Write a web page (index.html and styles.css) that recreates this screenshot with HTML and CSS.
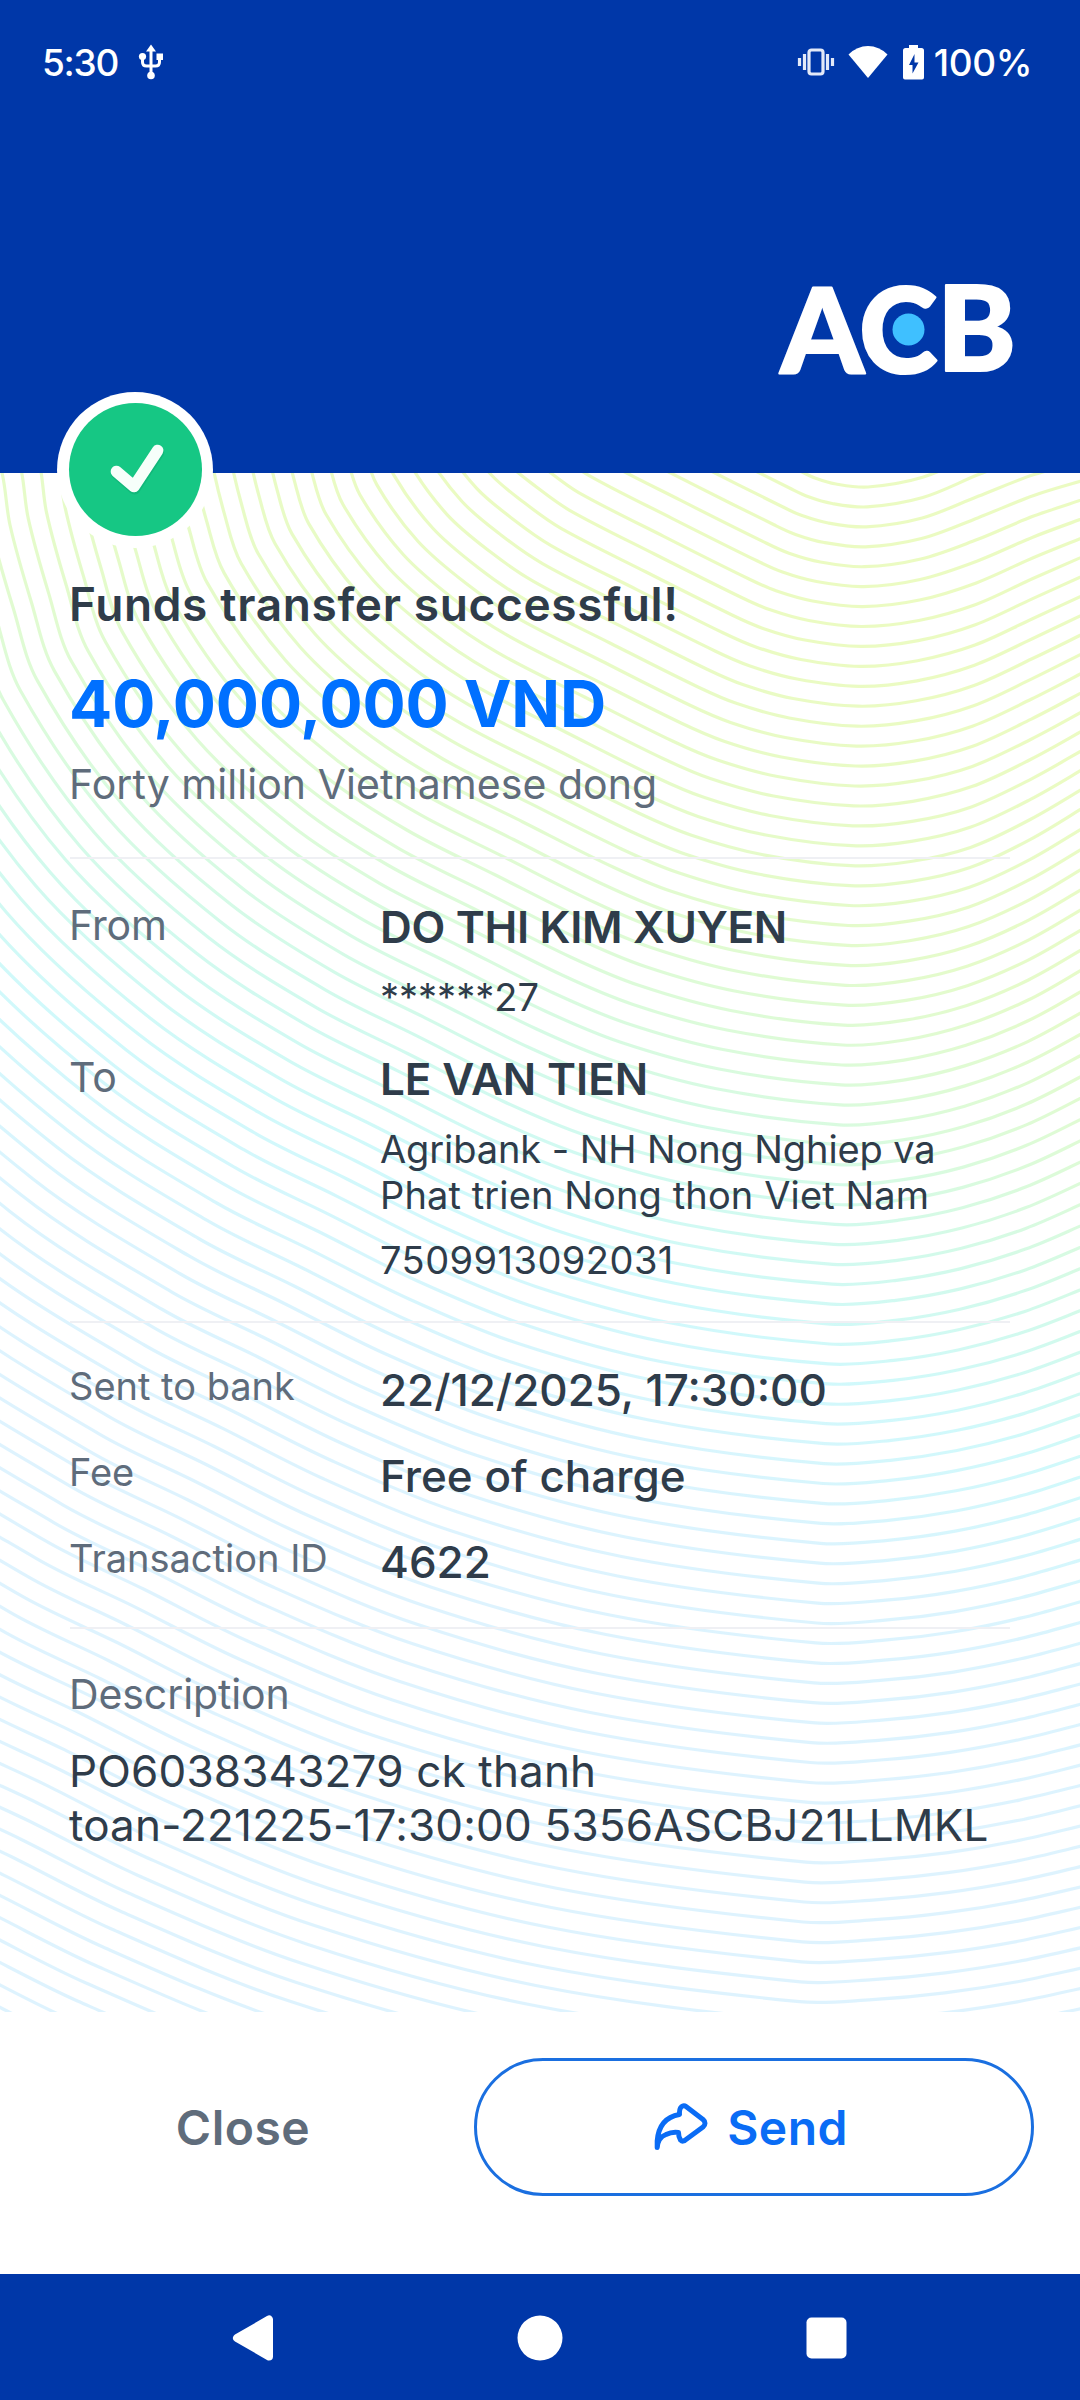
FILE: index.html
```html
<!DOCTYPE html>
<html lang="en">
<head>
<meta charset="utf-8">
<title>Funds transfer</title>
<link rel="stylesheet" href="styles.css">
</head>
<body>
<main class="screen">
  <header class="header">
    <div class="status">
      <div class="status-left">
        <span class="clock">5:30</span>
        <svg class="usb" width="26" height="36" viewBox="0 0 26 36" fill="none" stroke="#fff" stroke-width="3">
          <path d="M13 30V5M4.500 12v6q0 4 4 4h9q4 0 4-4v-6"/>
          <path d="M13 0.500l5 7h-10zM18.500 9.500h6.500v6.500h-6.500z" fill="#fff" stroke="none"/>
          <circle cx="4.500" cy="12.500" r="3.600" fill="#fff" stroke="none"/>
          <circle cx="13" cy="31.500" r="3.800" fill="#fff" stroke="none"/>
        </svg>
      </div>
      <div class="status-right">
        <svg class="vibrate" width="38" height="28" viewBox="0 0 38 28" fill="none" stroke="#e3e9f8" stroke-width="3.2">
          <rect x="12" y="2" width="14" height="24" rx="2.500"/>
          <path d="M7.500 6v16M2.500 10v8M30.500 6v16M35.500 10v8"/>
        </svg>
        <svg class="wifi" width="40" height="34" viewBox="0 0 40 34"><path fill="#fff" d="M20 33L0.500 9.500Q9 1 20 1t19.500 8.500z"/></svg>
        <svg class="battery" width="21" height="35" viewBox="0 0 21 35">
          <path fill="#fff" d="M6 0h9v3h3.500q2.500 0 2.500 2.500v27q0 2-2 2h-17q-2 0-2-2v-27q0-2.500 2.500-2.500H6z"/>
          <path fill="#0037a8" d="M11.500 9L6 20h3.500v8.500L15.500 17.500H11.500z"/>
        </svg>
        <span class="percent">100%</span>
      </div>
    </div>
    <svg class="logo" width="260" height="150" viewBox="-10 -30 260 150" role="img" aria-label="ACB">
      <g class="logo-text"><text x="4.500" y="92.500">A</text><text x="83" y="93">C</text><text x="161" y="91">B</text></g>
      <circle cx="132.500" cy="49.500" r="16" fill="#3fc0ff"/>
    </svg>
  </header>
  <section class="receipt">
    <svg class="waves" id="waves" width="1080" height="1539" viewBox="0 473 1080 1539">
      <defs>
        <linearGradient id="tint" gradientUnits="userSpaceOnUse" x1="500" y1="500" x2="70" y2="1434">
          <stop offset="0" stop-color="#ebfbc2"/>
          <stop offset=".22" stop-color="#e5fbca"/>
          <stop offset=".38" stop-color="#dcfbda"/>
          <stop offset=".5" stop-color="#d2faec"/>
          <stop offset=".63" stop-color="#d0f9fb"/>
          <stop offset=".8" stop-color="#dbf4fe"/>
          <stop offset="1" stop-color="#def3fe"/>
        </linearGradient>
      </defs>
    </svg>
    <div class="badge">
      <svg width="133" height="133" viewBox="0 0 133 133">
        <path d="M48 70.500L65.500 85.500L89.200 49.500" fill="none" stroke="#0a9f68" stroke-opacity=".35" stroke-width="12" stroke-linecap="round" stroke-linejoin="round"/>
        <path d="M47.400 68.500L65 83.500L88.700 47.500" fill="none" stroke="#f6fffa" stroke-width="11.500" stroke-linecap="round" stroke-linejoin="round"/>
      </svg>
    </div>
    <div class="content">
      <h1 class="title">Funds transfer successful!</h1>
      <p class="amount">40,000,000 VND</p>
      <p class="words">Forty million Vietnamese dong</p>
      <hr class="rule">
      <div class="parties">
        <div class="row">
          <span class="label big">From</span>
          <div class="value"><p class="name sender">DO THI KIM XUYEN</p><p class="detail">******27</p></div>
        </div>
        <div class="row">
          <span class="label big">To</span>
          <div class="value">
            <p class="name">LE VAN TIEN</p>
            <p class="detail"><span class="tight">Agribank - NH Nong Nghiep va</span><br><span class="loose">Phat trien Nong thon Viet Nam</span></p>
            <p class="detail account">7509913092031</p>
          </div>
        </div>
      </div>
      <hr class="rule">
      <div class="facts">
        <div class="row"><span class="label">Sent to bank</span><span class="fact">22/12/2025, 17:30:00</span></div>
        <div class="row"><span class="label">Fee</span><span class="fact">Free of charge</span></div>
        <div class="row"><span class="label">Transaction ID</span><span class="fact">4622</span></div>
      </div>
      <hr class="rule">
      <p class="label big desc-label">Description</p>
      <p class="desc">PO6038343279 ck thanh<br>toan-221225-17:30:00 5356ASCBJ21LLMKL</p>
    </div>
  </section>
  <footer class="actions">
    <button class="close">Close</button>
    <button class="send">
      <svg width="54" height="48" viewBox="0 0 54 48" fill="none" stroke="#0a6cf5" stroke-width="5" stroke-linecap="round" stroke-linejoin="round">
        <path d="M29 2.800Q25 4 25.500 11.500Q5 15 3.200 38V44.500Q4 34.500 12 31.500Q18 28.500 24.500 29.500Q24.500 34 26.500 37Q29 39.500 32 36.500L49 24Q53 20 49 16.500L32 3.500Q30.500 2.300 29 2.800Z"/>
      </svg>
      <span>Send</span>
    </button>
  </footer>
  <nav class="navbar">
    <svg width="42" height="46" viewBox="0 0 42 46"><path d="M37 4.500V41.500L5 23z" fill="#fff" stroke="#fff" stroke-width="8" stroke-linejoin="round"/></svg>
    <svg width="46" height="46" viewBox="0 0 46 46"><circle cx="23" cy="23" r="22.500" fill="#fff"/></svg>
    <svg width="42" height="42" viewBox="0 0 42 42"><rect x="0.500" y="0.500" width="40" height="41" rx="5" fill="#fff"/></svg>
  </nav>
</main>
<script src="waves.js"></script>
</body>
</html>
```
FILE: waves.js
```js
// Contour lines: every line k is a smooth curve through one point on each guide ray.
const leftRays = [
  [585, 270, -18.9, 3.7],
  [599, 315, -18.64, 5],
  [594, 324, -18.25, 6.28],
  [594, 349, -17.6, 7.85],
  [597.5, 357.5, -16.97, 9.8],
  [609, 369, -14.7, 13.25],
  [618, 374, -11.7, 16.1],
  [633, 386, -9.05, 17.76],
  [716, 429, -8.8, 17.85],
  [800, 471, -8.5, 18],
  [815, 478, -6.5, 18.8],
  [836, 484, -3.9, 19.5]
];
const riseKeys = [
  [0, [10, 34, 54, 65]],
  [7, [6, 22, 48, 73]],
  [20, [4, 18, 46, 82]],
  [28, [5, 20, 45, 80]],
  [43, [3.6, 14.5, 32.6, 58]],
  [60, [2.6, 10.5, 24, 42]],
  [80, [2, 8.5, 19, 34]]
];

function rises(k) {
  let i = 0;
  while (i < riseKeys.length - 2 && k > riseKeys[i + 1][0]) i++;
  const [k0, a] = riseKeys[i];
  const [k1, b] = riseKeys[i + 1];
  const t = (k - k0) / (k1 - k0);
  return a.map((v, n) => v + (b[n] - v) * t);
}

function linePoints(k) {
  const pts = leftRays.map(([x, y, vx, vy]) => [x + k * vx, y + k * vy]);
  const mx = 868 - 0.9 * k;
  const my = 487 + 19.93 * k;
  pts.push([mx, my]);
  rises(k).forEach((r, n) => pts.push([mx + (1090 - mx) * (n + 1) / 4, my - r]));
  return pts;
}

function smooth(p) {
  let d = `M${p[0][0].toFixed(1)} ${p[0][1].toFixed(1)}`;
  for (let i = 0; i < p.length - 1; i++) {
    const a = p[Math.max(i - 1, 0)], b = p[i], c = p[i + 1], e = p[Math.min(i + 2, p.length - 1)];
    const len = Math.hypot(c[0] - b[0], c[1] - b[1]) / 3;
    const t1 = Math.hypot(c[0] - a[0], c[1] - a[1]) || 1;
    const t2 = Math.hypot(e[0] - b[0], e[1] - b[1]) || 1;
    const q = [
      b[0] + (c[0] - a[0]) / t1 * len, b[1] + (c[1] - a[1]) / t1 * len,
      c[0] - (e[0] - b[0]) / t2 * len, c[1] - (e[1] - b[1]) / t2 * len,
      c[0], c[1]
    ];
    d += 'C' + q.map(v => v.toFixed(1)).join(' ');
  }
  return d;
}

const waves = document.getElementById('waves');
for (let k = 0; k <= 100; k++) {
  const path = document.createElementNS('http://www.w3.org/2000/svg', 'path');
  path.setAttribute('d', smooth(linePoints(k)));
  path.setAttribute('class', 'wave');
  waves.appendChild(path);
}
```
FILE: styles.css
```css
* { box-sizing: border-box; margin: 0; padding: 0; }
body { width: 1080px; height: 2400px; overflow: hidden; background: #fff; font-family: Inter, "Noto Sans", sans-serif; color: #2f3c4a; }
.screen { display: flex; flex-direction: column; width: 1080px; height: 2400px; }

.header { display: flex; flex-direction: column; height: 473px; background: #0037a8; }
.status { display: flex; justify-content: space-between; align-items: center; height: 124px; padding: 0 48px 0 42px; color: #fff; font-size: 37px; font-weight: 500; }
.status-left, .status-right { display: flex; align-items: center; }
.clock { letter-spacing: -1.3px; }
.percent { margin-left: 10px; letter-spacing: -0.4px; }
.usb { margin-left: 20px; }
.wifi { margin-left: 13px; }
.battery { margin-left: 15px; }
.logo { align-self: flex-end; margin: 126px 54px 0 0; }
.logo-text { font-family: Lato, sans-serif; font-weight: 900; font-size: 119px; fill: #fff; stroke: #fff; stroke-width: 2.2; stroke-linejoin: round; }

.receipt { position: relative; height: 1539px; padding: 0 69px; }
.waves { position: absolute; left: 0; top: 0; }
.wave { fill: none; stroke: url(#tint); stroke-width: 3.2; }
.badge { position: absolute; left: 57px; top: -81px; width: 156px; height: 156px; border-radius: 50%; background: #fff; padding: 11px 12px; }
.badge svg { display: block; background: #16c784; border-radius: 50%; }
.content { position: relative; padding-top: 101px; }
.title { font-size: 46px; line-height: 60px; font-weight: 600; letter-spacing: 0.65px; white-space: nowrap; }
.amount { margin-top: 35px; font-size: 64px; line-height: 70px; font-weight: 700; letter-spacing: -0.1px; color: #0070ff; }
.words { margin-top: 17px; font-size: 41px; line-height: 56px; letter-spacing: 0.05px; color: #5f6c7b; }
.rule { height: 2px; margin: 0 1px; border: 0; background: #eff0f4; }
.words + .rule { margin-top: 45px; }
.row { display: flex; align-items: flex-start; }
.label { width: 311px; font-size: 38px; line-height: 46px; color: #5f6c7b; }
.label.big { font-size: 41px; line-height: 50px; letter-spacing: -0.1px; }
.parties { display: flex; flex-direction: column; gap: 32px; padding: 41px 0 38px; }
.name { font-size: 44px; line-height: 54px; font-weight: 600; letter-spacing: -0.1px; }
.sender { letter-spacing: -0.32px; }
.detail { margin-top: 20px; font-size: 38px; line-height: 46px; white-space: nowrap; }
.tight { letter-spacing: -0.1px; }
.loose { letter-spacing: 0.12px; }
.account { margin-top: 19px; letter-spacing: 0.45px; }
.facts { display: flex; flex-direction: column; gap: 32px; padding: 40px 0 38px; }
.fact { font-size: 44px; line-height: 54px; font-weight: 500; }
.desc-label { margin-top: 40px; }
.desc { margin-top: 25px; font-size: 44px; line-height: 54px; letter-spacing: 0.17px; white-space: nowrap; }

.actions { display: flex; justify-content: space-between; height: 262px; padding: 46px; }
button { border: 0; background: none; font: 600 48px Inter, "Noto Sans", sans-serif; }
.close { width: 394px; height: 138px; color: #5f6c7b; letter-spacing: 0.5px; }
.send { display: flex; align-items: center; justify-content: center; gap: 19px; width: 560px; height: 138px; padding-right: 6px; border: 3px solid #1a6fe0; border-radius: 69px; color: #0a6cf5; letter-spacing: 0.4px; }

.navbar { display: flex; align-items: center; gap: 243px; height: 126px; padding: 2px 0 0 232px; background: #0037a8; }
```
